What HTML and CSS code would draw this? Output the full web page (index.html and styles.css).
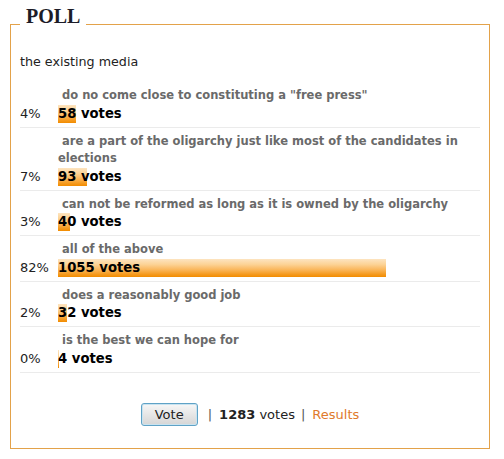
FILE: index.html
```html
<!DOCTYPE html>
<html>
<head>
<meta charset="utf-8">
<link rel="stylesheet" href="styles.css">
</head>
<body>
<fieldset class="poll">
  <legend class="poll-title">POLL</legend>
  <p class="question">the existing media</p>
  <div class="results">
    <div class="row">
      <div class="pct">4%</div>
      <div class="opt">
        <div class="label">&nbsp;do no come close to constituting a "free press"</div>
        <div class="votes" style="--w:18px"><b>58</b> votes</div>
      </div>
    </div>
    <div class="row">
      <div class="pct">7%</div>
      <div class="opt">
        <div class="label">&nbsp;are a part of the oligarchy just like most of the candidates in elections</div>
        <div class="votes" style="--w:29px"><b>93</b> votes</div>
      </div>
    </div>
    <div class="row">
      <div class="pct">3%</div>
      <div class="opt">
        <div class="label">&nbsp;can not be reformed as long as it is owned by the oligarchy</div>
        <div class="votes" style="--w:12px"><b>40</b> votes</div>
      </div>
    </div>
    <div class="row">
      <div class="pct">82%</div>
      <div class="opt">
        <div class="label">&nbsp;all of the above</div>
        <div class="votes" style="--w:328px"><b>1055</b> votes</div>
      </div>
    </div>
    <div class="row">
      <div class="pct">2%</div>
      <div class="opt">
        <div class="label">&nbsp;does a reasonably good job</div>
        <div class="votes" style="--w:9px"><b>32</b> votes</div>
      </div>
    </div>
    <div class="row">
      <div class="pct">0%</div>
      <div class="opt">
        <div class="label">&nbsp;is the best we can hope for</div>
        <div class="votes" style="--w:1px"><b>4</b> votes</div>
      </div>
    </div>
  </div>
  <div class="footer">
    <button class="vote-btn" type="button">Vote</button>
    <span class="summary"><span class="sep">|</span><b>1283</b> votes<span class="sep">|</span><a class="results-link" href="#">Results</a></span>
  </div>
</fieldset>
</body>
</html>
```

FILE: styles.css
```css
html, body {
  margin: 0;
  padding: 0;
  background: #fff;
}

body {
  font-family: "DejaVu Sans", Verdana, sans-serif;
  color: #222;
}

.poll {
  box-sizing: border-box;
  width: 480px;
  margin: 6px 0 0 10px;
  padding: 0 9px 22px 9px;
  border: 1px solid #e3a24a;
  min-width: 0;
}

.poll-title {
  padding: 0 6px 16px 6px;
  font-family: "Liberation Serif", "Times New Roman", serif;
  font-weight: bold;
  font-size: 20px;
  line-height: 20px;
  color: #1c1c28;
}

.question {
  margin: 12px 0 12px 0;
  font-size: 12.7px;
  line-height: 16px;
  color: #222;
}

.results {
  display: flex;
  flex-direction: column;
}

.row {
  display: grid;
  grid-template-columns: 38px 1fr;
  padding: 5px 0 4px 0;
  border-bottom: 1px solid #ebebeb;
}

.pct {
  align-self: end;
  font-size: 13px;
  line-height: 18px;
  color: #222;
}

.label {
  font-size: 11.5px;
  font-weight: bold;
  line-height: 17.5px;
  color: #6a6a6a;
}

.votes {
  height: 18px;
  font-size: 13.2px;
  line-height: 18px;
  font-weight: bold;
  color: #000;
  background-image: linear-gradient(#fde4c0 0%, #fcd396 30%, #fab65a 60%, #f59a1e 85%, #f28c00 100%);
  background-repeat: no-repeat;
  background-size: var(--w) 100%;
}

.votes b {
  font-weight: bold;
}

.footer {
  margin-top: 30px;
  display: flex;
  justify-content: center;
  align-items: center;
  gap: 5px;
  font-size: 13px;
  color: #222;
}

.vote-btn {
  box-sizing: border-box;
  width: 57px;
  height: 23px;
  margin: 0;
  padding: 0;
  font-family: "DejaVu Sans", Verdana, sans-serif;
  font-size: 13px;
  color: #222;
  border: 1px solid #5fa2c6;
  border-radius: 3px;
  background: linear-gradient(#f7f7f7, #e6e6e6 50%, #d6d6d6);
  box-shadow: inset 0 0 0 1px #c9e3f0;
}

.summary {
  white-space: nowrap;
}

.sep {
  display: inline-block;
  margin: 0 7px 0 5px;
  color: #555;
}

.summary b + .sep,
.summary .sep + b {
  margin-left: 0;
}

.summary .sep:nth-of-type(2) {
  margin: 0 7px 0 6px;
}

.results-link {
  color: #e07a2c;
  text-decoration: none;
}
```
